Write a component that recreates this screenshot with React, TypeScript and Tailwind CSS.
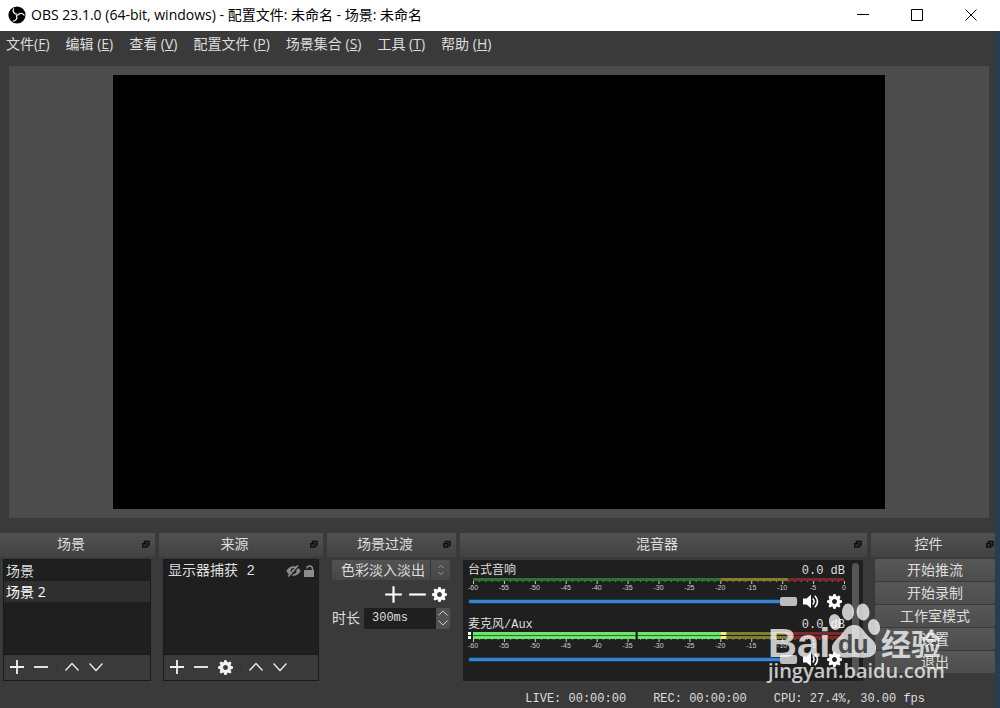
import { ReactNode, useState } from "react";
import clsx from "clsx";

const menus = [
  { label: "文件", hotkey: "F", space: false },
  { label: "编辑", hotkey: "E", space: true },
  { label: "查看", hotkey: "V", space: true },
  { label: "配置文件", hotkey: "P", space: true },
  { label: "场景集合", hotkey: "S", space: true },
  { label: "工具", hotkey: "T", space: true },
  { label: "帮助", hotkey: "H", space: true },
];

const scenes = ["场景", "场景 2"];
const controls = ["开始推流", "开始录制", "工作室模式", "设置", "退出"];
const transitions = ["色彩淡入淡出", "直接切换"];

const uiFont = "font-['Open_Sans','Noto_Sans_CJK_SC',sans-serif]";
const monoFont = "font-['Liberation_Mono','Noto_Sans_CJK_SC',monospace]";

const ObsLogo = () => (
  <svg width="18" height="18" viewBox="0 0 18 18" fill="none" className="ml-2">
    <circle cx="9" cy="9" r="8.600" fill="#000" />
    {[0, 120, 240].map((angle) => (
      <g key={angle} transform={`rotate(${angle} 9 9)`}>
        <path d="M8.800 8.200C5.800 7.800 4.400 5.400 5.600 2.800" stroke="#eee" strokeWidth="1.300" strokeLinecap="round" />
      </g>
    ))}
  </svg>
);

const PlusIcon = ({ size = 16 }: { size?: number }) => (
  <svg width={size} height={size} viewBox="0 0 16 16" stroke="currentColor" strokeWidth="1.8">
    <path d="M8 1v14M1 8h14" />
  </svg>
);

const MinusIcon = ({ size = 16 }: { size?: number }) => (
  <svg width={size} height={size} viewBox="0 0 16 16" stroke="currentColor" strokeWidth="1.8">
    <path d="M1 8h14" />
  </svg>
);

const UpIcon = () => (
  <svg width="16" height="16" viewBox="0 0 16 16" fill="none" stroke="currentColor" strokeWidth="1.2">
    <path d="M1.5 11.5L8 4.500l6.500 7" />
  </svg>
);

const DownIcon = () => (
  <svg width="16" height="16" viewBox="0 0 16 16" fill="none" stroke="currentColor" strokeWidth="1.2">
    <path d="M1.5 4.500L8 11.500l6.500-7" />
  </svg>
);

const GearIcon = () => (
  <svg width="15" height="15" viewBox="0 0 8 8" fill="currentColor">
    <path d="M3.5 0l-.5 1.190c-.1.030-.19.080-.28.130l-1.190-.5-.72.720.5 1.190c-.05.1-.09.180-.13.280l-1.190.5v1l1.190.5c.04.1.08.180.130.280l-.5 1.190.72.720 1.190-.5c.09.040.18.090.28.130l.5 1.190h1l.5-1.190c.09-.04.190-.08.280-.13l1.190.5.720-.72-.5-1.190c.04-.09.090-.19.130-.28l1.190-.5v-1l-1.190-.5c-.03-.09-.08-.19-.13-.28l.5-1.190-.72-.72-1.190.5c-.09-.04-.19-.09-.28-.13l-.5-1.190h-1zm.5 2.700c.72 0 1.300.58 1.300 1.300s-.58 1.300-1.300 1.300-1.300-.58-1.300-1.300.58-1.300 1.300-1.300z" />
  </svg>
);

const SpeakerIcon = () => (
  <svg width="16" height="15" viewBox="0 0 16 15" fill="none" stroke="currentColor">
    <path d="M0 4.500h3.500L8 .8v13.400L3.500 10.500H0z" fill="currentColor" stroke="none" />
    <path d="M9.800 4.600q2.600 2.900 0 5.800" strokeWidth="1.500" />
    <path d="M11.800 1.800q5.400 5.700 0 11.400" strokeWidth="1.600" />
  </svg>
);

const HiddenIcon = () => (
  <svg width="15" height="12" viewBox="0 0 15 12" fill="none">
    <path d="M.3 6Q3 1.300 7.500 1.300T14.700 6Q12 10.700 7.500 10.700T.3 6z" fill="#8c8c8c" />
    <circle cx="7.5" cy="6" r="2.900" fill="#1f1f1f" />
    <circle cx="7.5" cy="6" r="1.600" fill="#8c8c8c" />
    <path d="M3.600 12.200L12.800 1" stroke="#1f1f1f" strokeWidth="1.500" />
    <path d="M2.200 11.500L12 .3" stroke="#8c8c8c" strokeWidth="1.600" />
  </svg>
);

const UnlockIcon = () => (
  <svg width="10" height="12" viewBox="0 0 10 12" fill="none">
    <path d="M0 5h10v7H0z" fill="#8c8c8c" />
    <path d="M3 3.500Q3 1 5.700 1T8.500 3.800V6" stroke="#8c8c8c" strokeWidth="1.500" />
  </svg>
);

const FloatIcon = () => (
  <svg width="8" height="8" viewBox="0 0 8 8" fill="none" stroke="#0c0c0c">
    <path d="M2.500 3V1.500H7V5.500H5.500" strokeWidth="1.400" />
    <path d="M.7 3.700h4.200v3.400H.7z" fill="#333" strokeWidth="1.200" />
  </svg>
);

const IconButton = ({ label, children }: { label: string; children: ReactNode }) => (
  <button aria-label={label} className="flex w-4 items-center justify-center text-[#f2f2f2]">
    {children}
  </button>
);

const Dock = ({ title, className, children }: { title: string; className: string; children: ReactNode }) => (
  <section className={clsx("flex flex-col", className)}>
    <header className="flex h-6 items-center bg-linear-to-b from-[#515151] to-[#424242] pr-[5px] pb-[2px]">
      <h2 className="flex-1 text-center text-sm leading-5">{title}</h2>
      <button aria-label="浮动">
        <FloatIcon />
      </button>
    </header>
    {children}
  </section>
);

type MeterProps = { active?: boolean };

// scale runs from -60 dB at 0% to 0 dB at 100%
const pos = (db: number) => `${((db + 60) / 60) * 100}%`;
const span = (from: number, to: number) => `${((to - from) / 60) * 100}%`;

const Meter = ({ active }: MeterProps) => {
  const bars = active ? [0, 4] : [0];
  const base = active ? 7 : 3;
  return (
    <div className="pr-px pl-[5px]">
      <svg className="block w-full overflow-visible" height={base + 10}>
        {bars.map((y) => (
          <g key={y}>
            <rect x="0" y={y} width={span(-60, -20)} height="3" fill={active ? "#6fe36f" : "#2c742c"} />
            <rect x={pos(-20)} y={y} width={span(-20, -9)} height="3" fill="#80802c" />
            <rect x={pos(-9)} y={y} width={span(-9, 0)} height="3" fill="#802828" />
            {active && <rect x={pos(-20)} y={y} width="6" height="3" fill="#f0ef80" />}
            {active && <rect x="-5" y={y} width="3" height="3" fill="#fff" />}
          </g>
        ))}
        {active && <rect x="0" y="3" width={span(-60, -20)} height="1" fill="#1f7a1f" />}
        {active && <rect x={pos(-33.700)} y="0" width="2" height="7" fill="#111" />}
        {Array.from({ length: 61 }, (_, i) => (
          <rect key={i} x={pos(i - 60)} y={base} width="1" height={i % 5 === 0 ? 3 : 1} fill={i % 5 === 0 ? "#ccc" : "#888"} />
        ))}
        {Array.from({ length: 13 }, (_, i) => (
          <text key={i} x={pos(i * 5 - 60)} y={base + 9} textAnchor="middle" fill="#ccc" className="font-['Liberation_Sans',sans-serif] text-[7px]">
            {i * 5 - 60}
          </text>
        ))}
      </svg>
    </div>
  );
};

const Channel = ({ name, active }: { name: string; active?: boolean }) => {
  const [volume, setVolume] = useState(100);
  return (
    <div>
      <div className={clsx("flex justify-between text-xs leading-[14px]", monoFont)}>
        <span>{name}</span>
        <span>0.0 dB</span>
      </div>
      <Meter active={active} />
      <div className="mt-[2px] flex items-center pr-[3px]">
        <input
          type="range"
          aria-label={name}
          value={volume}
          onChange={(e) => setVolume(Number(e.target.value))}
          className="h-4 min-w-0 flex-1 appearance-none bg-transparent [&::-webkit-slider-runnable-track]:h-[5px] [&::-webkit-slider-runnable-track]:rounded-sm [&::-webkit-slider-runnable-track]:border [&::-webkit-slider-runnable-track]:border-[#143a66] [&::-webkit-slider-runnable-track]:bg-[#3f82c8] [&::-webkit-slider-thumb]:-mt-[3px] [&::-webkit-slider-thumb]:h-[9px] [&::-webkit-slider-thumb]:w-[17px] [&::-webkit-slider-thumb]:appearance-none [&::-webkit-slider-thumb]:rounded-xs [&::-webkit-slider-thumb]:bg-[#bdbdbd]"
        />
        <button aria-label="静音" className="ml-[5px] text-white">
          <SpeakerIcon />
        </button>
        <button aria-label="音频设置" className="ml-2 text-white">
          <GearIcon />
        </button>
      </div>
    </div>
  );
};

const Watermark = () => (
  <svg className="pointer-events-none absolute right-[43px] bottom-[18px]" width="186" height="90" viewBox="0 0 186 90" fill="#fff" fillOpacity="0.75">
    <text x="2" y="57" className="font-['Liberation_Sans',sans-serif] text-[40px] font-bold">Bai</text>
    <ellipse cx="69" cy="22" rx="6" ry="8" transform="rotate(-12 69 22)" />
    <ellipse cx="82" cy="12" rx="6" ry="8.500" />
    <ellipse cx="97" cy="12" rx="6.500" ry="8.500" transform="rotate(-6 97 12)" />
    <ellipse cx="108" cy="27" rx="6" ry="8" transform="rotate(-12 108 27)" />
    <path d="M88 25c8 0 9 6 14 11 6 5 9 8 8 14-1 7-8 9-22 7-13 2-20 0-22-7-1-6 3-9 8-14 5-5 6-11 14-11z" />
    <text x="72" y="53" fill="#4a4a4a" fillOpacity="1" className="font-['Liberation_Sans',sans-serif] text-[25px] font-bold">du</text>
    <text x="115" y="55" className="font-['Noto_Sans_CJK_SC',sans-serif] text-[30px] font-bold">经验</text>
    <text x="2" y="78" className="font-['Open_Sans',sans-serif] text-[20px] font-semibold">jingyan.baidu.com</text>
  </svg>
);

const App = () => {
  const [scene, setScene] = useState(1);

  return (
    <div className={clsx("relative flex min-h-screen flex-col border-r-[5px] border-[#263f50] bg-[#3a3a3a] text-[#dedede]", uiFont)}>
      <div className="-mr-[5px] flex h-[31px] items-center bg-white pb-[2px] text-black">
        <ObsLogo />
        <h1 className="ml-[5px] flex-1 text-sm leading-5">OBS 23.1.0 (64-bit, windows) - 配置文件: 未命名 - 场景: 未命名</h1>
        <div className="flex">
          <button aria-label="最小化" className="flex w-[54px] justify-center">
            <svg width="12" height="12" stroke="#000"><path d="M0 5.500h12" /></svg>
          </button>
          <button aria-label="最大化" className="flex w-[54px] justify-center">
            <svg width="12" height="12" fill="none" stroke="#000"><path d="M.5 .5h11v11H.5z" /></svg>
          </button>
          <button aria-label="关闭" className="mr-[2px] flex w-[54px] justify-center">
            <svg width="12" height="12" stroke="#000"><path d="M.5 .5l11 11M11.500 .5l-11 11" /></svg>
          </button>
        </div>
      </div>

      <nav className="flex h-[35px] gap-4 pt-[3px] pl-[6px] text-sm leading-5">
        {menus.map((menu) => (
          <button key={menu.hotkey} className="h-5">
            {menu.label}
            {menu.space && " "}(<span className="underline">{menu.hotkey}</span>)
          </button>
        ))}
      </nav>

      <main className="mr-[6px] ml-[9px] flex flex-1 items-center justify-center bg-[#4c4c4c] px-2">
        <div className="aspect-video w-4/5 bg-black" />
      </main>

      <div className="mt-[15px] flex h-[152px] gap-1">
        <Dock title="场景" className="w-[155px]">
          <div className="mt-[2px] mr-1 ml-[3px] flex h-[122px] flex-col border border-[#1a1a1a]">
            <ul className="flex-1 bg-[#1f1f1f]">
              {scenes.map((name, i) => (
                <li key={name}>
                  <button
                    onClick={() => setScene(i)}
                    className={clsx("block h-[21px] w-full pl-[2px] text-left text-sm leading-5", scene === i && "bg-[#2f2f2f] text-white")}
                  >
                    {name}
                  </button>
                </li>
              ))}
            </ul>
            <div className="flex h-[26px] items-center gap-2 border-t border-[#1a1a1a] px-[5px] pb-px">
              <IconButton label="添加场景"><PlusIcon /></IconButton>
              <IconButton label="删除场景"><MinusIcon /></IconButton>
              <span className="-mx-px h-4 w-px bg-[#363636]" />
              <IconButton label="上移"><UpIcon /></IconButton>
              <IconButton label="下移"><DownIcon /></IconButton>
            </div>
          </div>
        </Dock>

        <Dock title="来源" className="w-[164px]">
          <div className="mt-[2px] mr-1 ml-1 flex h-[122px] flex-col border border-[#1a1a1a]">
            <ul className="flex-1 bg-[#1f1f1f]">
              <li className="flex h-[22px] items-center pr-1 pl-1">
                <span className={clsx("flex-1 text-sm leading-5", monoFont)}>显示器捕获 2</span>
                <button aria-label="显示"><HiddenIcon /></button>
                <button aria-label="锁定" className="ml-[3px]"><UnlockIcon /></button>
              </li>
            </ul>
            <div className="flex h-[26px] items-center gap-2 border-t border-[#1a1a1a] px-[5px] pb-px">
              <IconButton label="添加来源"><PlusIcon /></IconButton>
              <IconButton label="删除来源"><MinusIcon /></IconButton>
              <IconButton label="来源属性"><GearIcon /></IconButton>
              <span className="-mx-px h-4 w-px bg-[#363636]" />
              <IconButton label="上移"><UpIcon /></IconButton>
              <IconButton label="下移"><DownIcon /></IconButton>
            </div>
          </div>
        </Dock>

        <Dock title="场景过渡" className="w-[129px]">
          <div className="mt-[3px] mr-[6px] ml-[5px]">
            <div className="grid h-5 items-center">
              <select
                aria-label="场景过渡"
                className="col-start-1 row-start-1 h-5 w-full appearance-none rounded-xs bg-linear-to-b from-[#525252] to-[#474747] pl-[9px] text-sm leading-5"
              >
                {transitions.map((t) => (
                  <option key={t}>{t}</option>
                ))}
              </select>
              <span className="pointer-events-none col-start-1 row-start-1 flex h-5 w-5 items-center justify-center justify-self-end border-l border-[#353535] text-[#999]">
                <svg width="8" height="12" fill="none" stroke="currentColor"><path d="M1.500 4L4 1.500 6.500 4M1.500 8L4 10.500 6.500 8" /></svg>
              </span>
            </div>
            <div className="mt-1 flex h-5 items-center justify-end gap-[5px] pr-[3px] text-white">
              <button aria-label="添加过渡"><PlusIcon size={19} /></button>
              <button aria-label="删除过渡"><MinusIcon size={19} /></button>
              <button aria-label="过渡设置"><GearIcon /></button>
            </div>
            <div className="mt-[3px] flex h-[22px] items-center">
              <label htmlFor="duration" className="w-8 shrink-0 text-sm leading-5">时长</label>
              <input
                id="duration"
                defaultValue="300ms"
                className={clsx("h-[21px] min-w-0 flex-1 rounded-l-xs bg-[#1f1f1f] pl-2 text-xs", monoFont)}
              />
              <div className="flex h-[21px] w-[14px] flex-col rounded-r-xs bg-[#515151]">
                <button aria-label="增加" className="flex flex-1 items-center justify-center">
                  <svg width="10" height="6" fill="none" stroke="#ccc"><path d="M.5 5.500L5 1l4.500 4.500" /></svg>
                </button>
                <button aria-label="减少" className="flex flex-1 items-center justify-center">
                  <svg width="10" height="6" fill="none" stroke="#ccc"><path d="M.5 .5L5 5 9.500 .5" /></svg>
                </button>
              </div>
            </div>
          </div>
        </Dock>

        <Dock title="混音器" className="min-w-0 flex-1">
          <div className="mt-[3px] mr-1 ml-[3px] flex h-[121px] bg-[#1f1f1f] pl-[5px]">
            <div className="flex min-w-0 flex-1 flex-col gap-[9px] pt-1">
              <Channel name="台式音响" />
              <Channel name="麦克风/Aux" active />
            </div>
            <div className="mt-[3px] mr-1 ml-[7px] h-[113px] w-[7px] rounded-sm bg-[#555]" />
          </div>
        </Dock>

        <Dock title="控件" className="w-[124px] [&>header]:pr-px">
          <div className="mt-[2px] ml-1 flex flex-col gap-px">
            {controls.map((label) => (
              <button key={label} className="h-[22px] rounded-xs bg-linear-to-b from-[#575757] to-[#4d4d4d] text-sm leading-5">
                {label}
              </button>
            ))}
          </div>
        </Dock>
      </div>

      <footer className={clsx("flex h-[23px] items-center justify-end gap-[27px] pt-1 pr-[70px] text-xs", monoFont)}>
        <span>LIVE: 00:00:00</span>
        <span>REC: 00:00:00</span>
        <span>CPU: 27.4%, 30.00 fps</span>
      </footer>

      <Watermark />
    </div>
  );
};

export default App;
